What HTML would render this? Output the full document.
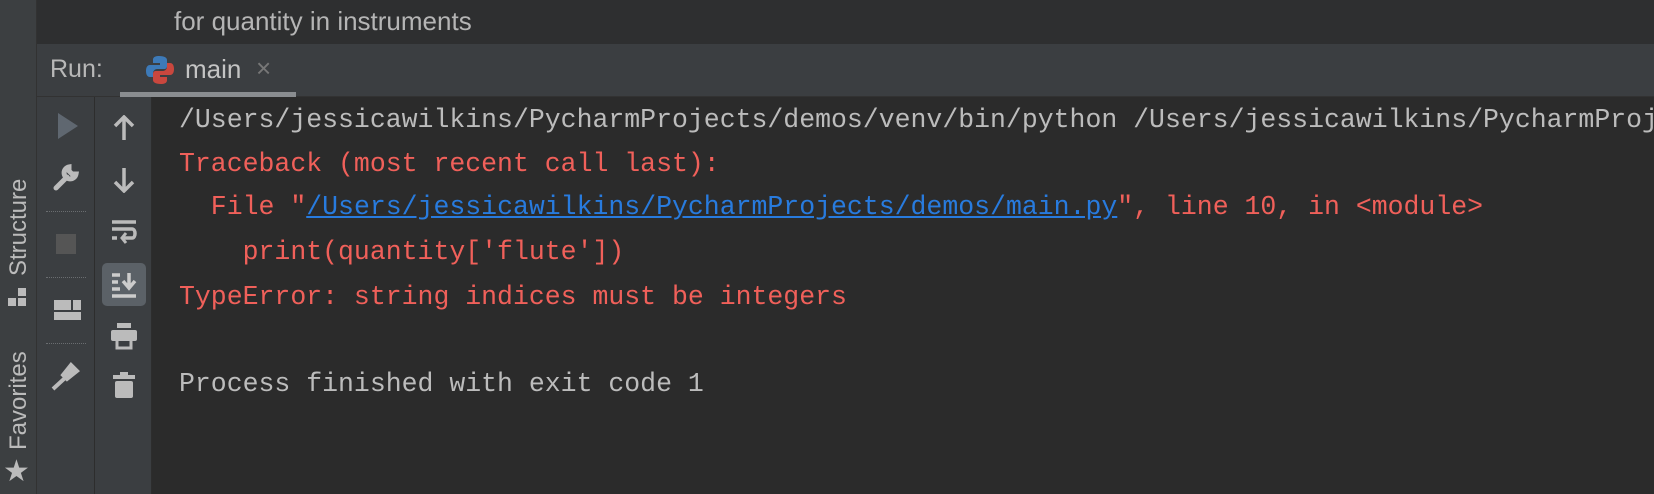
<!DOCTYPE html>
<html><head><meta charset="utf-8"><style>
*{margin:0;padding:0;box-sizing:border-box}
html,body{width:1654px;height:494px;overflow:hidden}
body{background:#2b2b2b;position:relative;font-family:"Liberation Sans",sans-serif}
.abs{position:absolute}
#strip{left:0;top:0;width:37px;height:494px;background:#3c3f41;border-right:1px solid #323232}
#top{left:37px;top:0;width:1617px;height:44px;background:#2e2f30}
#tabs{left:37px;top:44px;width:1617px;height:53px;background:#3b3e41;border-bottom:1px solid #323232}
#c1{left:37px;top:97px;width:58px;height:397px;background:#3b3e41;border-right:1px solid #2d2d2d}
#c2{left:95px;top:97px;width:57px;height:397px;background:#3b3e41;border-right:1px solid #2d2d2d}
.mono{font-family:"Liberation Mono",monospace;font-size:26.5px;white-space:pre;left:179px;width:1475px;overflow:hidden}
.g{color:#bcbcbc}.r{color:#f0605a}.b{color:#287bde;text-decoration:underline}
.vt{transform:rotate(-90deg);transform-origin:left top;color:#bbb;font-size:24px;white-space:nowrap}
.sep{left:46px;width:40px;border-top:1px dotted #6a6d70;height:0}
</style></head><body>
<div id="strip" class="abs"></div>
<div id="top" class="abs"></div>
<div id="tabs" class="abs"></div>
<div id="c1" class="abs"></div>
<div id="c2" class="abs"></div>
<div class="abs" style="left:174px;top:6px;font-size:26px;color:#b5b5b5">for quantity in instruments</div>
<div class="abs" style="left:50px;top:55px;font-size:25px;color:#b8b8b8">Run:</div>
<svg class="abs" style="left:145px;top:55px" width="30" height="30" viewBox="0 0 30 30">
<path d="M14 1c-6 0-6 3-6 4v3h7v2H5c-3 0-4 3-4 6s1 6 4 6h3v-4c0-2 2-4 4-4h7c2 0 3-1 3-3V5c0-2-2-4-8-4z" fill="#3d7ab8"/>
<path d="M16 29c6 0 6-3 6-4v-3h-7v-2h10c3 0 4-3 4-6s-1-6-4-6h-3v4c0 2-2 4-4 4h-7c-2 0-3 1-3 3v6c0 2 2 4 8 4z" fill="#c9473e"/>
</svg>
<div class="abs" style="left:185px;top:54px;font-size:26px;color:#c4c4c4">main</div>
<div class="abs" style="left:256px;top:53px;font-size:26px;color:#777">×</div>
<div class="abs" style="left:120px;top:92px;width:176px;height:5px;background:#8a8d90"></div>
<div class="abs vt" style="left:5px;top:276px">Structure</div>
<div class="abs" style="left:8px;top:288px;width:18px;height:18px">
<div class="abs" style="left:10px;top:0;width:8px;height:8px;background:#bbb"></div>
<div class="abs" style="left:0;top:10px;width:8px;height:8px;background:#bbb"></div>
<div class="abs" style="left:10px;top:10px;width:8px;height:8px;background:#bbb"></div></div>
<div class="abs vt" style="left:5px;top:450px">Favorites</div>
<div class="abs" style="left:3px;top:455px;color:#bbb;font-size:30px;line-height:34px">★</div>
<svg class="abs" style="left:57px;top:113px" width="22" height="26"><path d="M1 0L21 13L1 26Z" fill="#5f6770"/></svg>
<svg class="abs" style="left:52px;top:163px" width="28" height="28" viewBox="0 0 28 28"><path d="M4 25L15 14M17 4a6 6 0 1 0 7 7l-4 0-3-3z" stroke="#bbb" stroke-width="5" fill="none" stroke-linecap="round"/></svg>
<div class="abs sep" style="top:211px"></div>
<div class="abs" style="left:56px;top:234px;width:20px;height:20px;background:#555"></div>
<div class="abs sep" style="top:277px"></div>
<div class="abs" style="left:54px;top:300px;width:17px;height:10px;background:#bbb"></div>
<div class="abs" style="left:73px;top:300px;width:8px;height:10px;background:#bbb"></div>
<div class="abs" style="left:54px;top:312px;width:27px;height:8px;background:#bbb"></div>
<div class="abs sep" style="top:343px"></div>
<svg class="abs" style="left:51px;top:361px" width="30" height="30"><path d="M2 28L14 17M12 14l8-10 6 6-10 8z" stroke="#bbb" stroke-width="4" fill="#bbb"/></svg>
<svg class="abs" style="left:111px;top:115px" width="26" height="26"><path d="M13 25V3M4 11l9-9 9 9" stroke="#bbb" stroke-width="3.5" fill="none"/></svg>
<svg class="abs" style="left:111px;top:167px" width="26" height="26"><path d="M13 1v22M4 15l9 9 9-9" stroke="#bbb" stroke-width="3.5" fill="none"/></svg>
<svg class="abs" style="left:110px;top:219px" width="28" height="28"><path d="M2 3h24M2 10h20c4 0 4 9 0 9h-8M2 19h5" stroke="#bbb" stroke-width="3.5" fill="none"/><path d="M16 14l-4 5 4 5" stroke="#bbb" stroke-width="3" fill="none"/></svg>
<div class="abs" style="left:102px;top:263px;width:44px;height:43px;background:#5b6167;border-radius:5px"></div>
<svg class="abs" style="left:110px;top:271px" width="28" height="28"><path d="M2 4h8M2 11h6M2 18h8M2 25h24M19 2v14M13 10l6 7 6-7" stroke="#ccc" stroke-width="3.5" fill="none"/></svg>
<svg class="abs" style="left:109px;top:321px" width="30" height="30"><rect x="8" y="2" width="14" height="5" fill="#bbb"/><rect x="2" y="9" width="26" height="11" rx="2" fill="#bbb"/><rect x="8" y="18" width="14" height="9" fill="none" stroke="#bbb" stroke-width="3"/></svg>
<svg class="abs" style="left:112px;top:372px" width="24" height="28"><rect x="8" y="0" width="8" height="3" fill="#bbb"/><rect x="1" y="3" width="22" height="4" fill="#bbb"/><rect x="3" y="9" width="18" height="17" rx="2" fill="#bbb"/></svg>
<div class="abs mono g" style="top:105px">/Users/jessicawilkins/PycharmProjects/demos/venv/bin/python /Users/jessicawilkins/PycharmProjects/demos/main.py</div>
<div class="abs mono r" style="top:149px">Traceback (most recent call last):</div>
<div class="abs mono r" style="top:192px">  File "<span class="b">/Users/jessicawilkins/PycharmProjects/demos/main.py</span>", line 10, in &lt;module&gt;</div>
<div class="abs mono r" style="top:237px">    print(quantity['flute'])</div>
<div class="abs mono r" style="top:282px">TypeError: string indices must be integers</div>
<div class="abs mono g" style="top:369px">Process finished with exit code 1</div>
</body></html>
